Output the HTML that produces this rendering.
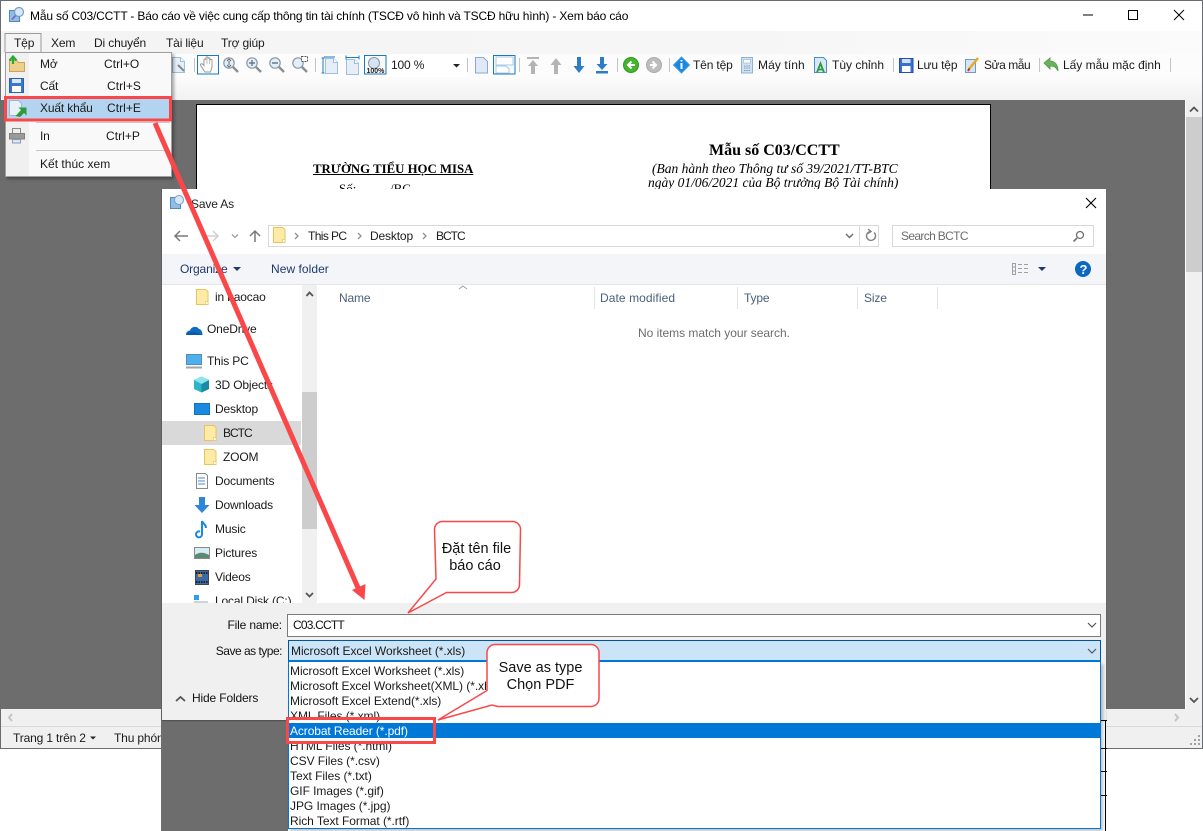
<!DOCTYPE html>
<html><head><meta charset="utf-8">
<style>
html,body{margin:0;padding:0;background:#fff}
body{width:1203px;height:831px;position:relative;overflow:hidden;font-family:"Liberation Sans",sans-serif;font-size:12px;color:#1a1a1a}
.a{position:absolute}
.t{position:absolute;white-space:nowrap;line-height:16px;height:16px;letter-spacing:-.15px}
svg{position:absolute;left:0;top:0;overflow:visible}
.s{font-family:"Liberation Serif",serif;color:#000;letter-spacing:0}
.h{color:#4c607a}
.l{color:#1a1a1a;left:290px;letter-spacing:-.05px}
.c{font-size:14.5px;letter-spacing:0;color:#111;text-align:center}
.m{letter-spacing:.05px}
</style></head><body>
<!-- main window -->
<div class="a" style="left:0;top:0;width:1203px;height:749px;background:#fff;box-sizing:border-box;border:1px solid #696c70;border-bottom:1px solid #6d6d6d"></div>
<div class="a" style="left:1px;top:31px;width:1201px;height:23px;background:linear-gradient(90deg,#f4f4f4,#f6f6f6 60%,#fbfbfb)"></div>
<div class="a" style="left:1px;top:54px;width:1201px;height:46px;background:linear-gradient(#fcfcfc,#fcfcfc 50%,#f1f1f1)"></div>
<div class="a" style="left:1px;top:100px;width:1184px;height:609px;background:#6d6d6d"></div>
<div class="a" style="left:1185px;top:100px;width:1px;height:609px;background:#fff"></div>
<!-- page -->
<div class="a" style="left:196px;top:104px;width:795px;height:120px;background:#fff;box-sizing:border-box;border:1.5px solid #000"></div>
<div class="t s" style="left:313px;top:161px;font-size:12.8px;font-weight:bold;text-decoration:underline">TRƯỜNG TIỂU HỌC MISA</div>
<div class="t s" style="left:339px;top:181px;font-size:13px">Số:</div>
<div class="t s" style="left:390px;top:181px;font-size:13px">/BC</div>
<div class="t s" style="left:709px;top:143px;font-size:16px;font-weight:bold">Mẫu số C03/CCTT</div>
<div class="t s" style="left:652px;top:161px;font-size:13.5px;font-style:italic">(Ban hành theo Thông tư số 39/2021/TT-BTC</div>
<div class="t s" style="left:648px;top:175px;font-size:13.5px;font-style:italic">ngày 01/06/2021 của Bộ trưởng Bộ Tài chính)</div>
<!-- title -->
<div class="t" style="left:30px;top:8px;color:#000;letter-spacing:-.17px">Mẫu số C03/CCTT - Báo cáo về việc cung cấp thông tin tài chính (TSCĐ vô hình và TSCĐ hữu hình) - Xem báo cáo</div>
<div class="t" style="left:14px;top:35px">Tệp</div>
<div class="t" style="left:51px;top:35px">Xem</div>
<div class="t" style="left:94px;top:35px">Di chuyển</div>
<div class="t" style="left:166px;top:35px">Tài liệu</div>
<div class="t" style="left:221px;top:35px">Trợ giúp</div>
<div class="a" style="left:388px;top:54px;width:78px;height:23px;background:#fff"></div>
<div class="t" style="left:391px;top:57px">100 %</div>
<div class="t" style="left:693px;top:57px">Tên tệp</div>
<div class="t" style="left:758px;top:57px;letter-spacing:.1px">Máy tính</div>
<div class="t" style="left:832px;top:57px;letter-spacing:0">Tùy chỉnh</div>
<div class="t" style="left:917px;top:57px">Lưu tệp</div>
<div class="t" style="left:984px;top:57px;letter-spacing:-.45px">Sửa mẫu</div>
<div class="t" style="left:1063px;top:57px;letter-spacing:-.02px">Lấy mẫu mặc định</div>
<svg width="1203" height="831" fill="none">
<defs>
<g id="mag"><circle cx="6" cy="6" r="5.2" fill="#e4eef6" stroke="#8b98a3" stroke-width="1.2"/><path d="M10 10l5 5" stroke="#8a8f94" stroke-width="2.4"/></g>
<g id="pg"><path d="M.5.5h8l4 4v11H.5z" fill="#e6eff8" stroke="#9cc0e0"/><path d="M8.500.5v4h4" fill="#fff" stroke="#9cc0e0"/></g>
<g id="fold"><path d="M.5 .5h9l2.500 2v13H.5z" fill="#ffeaa6" stroke="#e8c45c"/><rect x="9.500" y="12.500" width="2.500" height="3" fill="#fff" stroke="#e8c45c" stroke-width=".7"/></g>
</defs>
<!-- window icon -->
<path d="M9.500 10.500h10v11h-10z" fill="#8fbde6" stroke="#4f8ac2"/><circle cx="19" cy="12" r="4.500" fill="#d6e8f7" stroke="#7a9cc4" stroke-width="1.200"/><path d="M15.500 15.500l-3.500 4" stroke="#7c5eb0" stroke-width="1.500"/>
<!-- window buttons -->
<path d="M1083 15h10" stroke="#000"/><rect x="1128.500" y="10.500" width="9" height="9" stroke="#000"/><path d="M1174 10l10 10M1184 10l-10 10" stroke="#000"/>
<!-- tep tab -->
<path d="M5 52V33.500h36V52" stroke="#9a9a9a"/>
<!-- toolbar -->
<g transform="translate(172,57)"><use href="#pg"/><path d="M6 8l6 6" stroke="#888" stroke-width="2"/></g>
<path d="M194.500 58v14M315.500 58v14M467.500 58v14M519.500 58v14M617.500 58v14M669.500 58v14M893.500 58v14M1039.500 58v14M1170.500 58v14" stroke="#c4c4c4"/>
<rect x="197.500" y="55.500" width="21" height="18.500" fill="#fafafa" stroke="#1a78c2"/>
<path d="M205 72l-4-6c-1.500-2 .5-3 2-1.500l1 1V60c0-1.500 2-1.500 2 0v-2c0-1.500 2-1.500 2 0v1c0-1.500 2-1.500 2 0v1.500c0-1.500 2-1.500 2 0v6l-1.500 5.500z" fill="#fff" stroke="#9a9a9a"/>
<path d="M207 59v5M209.500 59v5M212 60v4" stroke="#aaa" stroke-width=".7"/>
<use href="#mag" x="223" y="57"/><use href="#mag" x="246" y="57"/><use href="#mag" x="269" y="57"/><use href="#mag" x="292" y="57"/>
<path d="M229 61v4M231 61l-2-2-2 2M227 65l2 2 2-2" stroke="#666"/>
<path d="M249 63h6M252 60v6M272 63h6" stroke="#6a7a8a" stroke-width="1.400"/>
<rect x="301.500" y="56.500" width="6" height="5" fill="#fff" stroke="#555" stroke-dasharray="2 1"/>
<g transform="translate(325,58)"><use href="#pg"/></g><path d="M323 58v15M321.500 58h3M321.500 73h3M324 57h11" stroke="#2178c4"/>
<g transform="translate(346,59)"><use href="#pg"/></g><path d="M346 57.500h13M346 55.500v4M359 55.500v4" stroke="#2178c4"/>
<rect x="364.500" y="55.500" width="21.500" height="18.500" fill="#fafafa" stroke="#1a78c2"/>
<circle cx="374" cy="63" r="5.500" fill="#d4e4f2" stroke="#8a98a5"/>
<text x="366.500" y="73" font-family="Liberation Sans" font-size="7" font-weight="bold" fill="#222">100%</text>
<path d="M453 64h7l-3.500 3.500z" fill="#222"/>
<g transform="translate(475,57)"><path d="M.5.500h8l4 4v11.500H.500z" fill="#dfe9f8" stroke="#8aa8d8"/></g>
<rect x="493.500" y="55.500" width="21.500" height="18.500" fill="#fafafa" stroke="#1a78c2"/>
<path d="M496 57h17v8h-17zM496 66h10l3 3v4h-13z" fill="#fff" stroke="#a9cbe8"/>
<g fill="#b4b4b4"><path d="M527 57h12v2h-12zM533 60l5 6h-3v8h-4v-8h-3z"/><path d="M556 58l5.500 7h-3.500v9h-4v-9h-3.500z"/></g>
<g fill="#2d7cc8"><path d="M577 57h4v9h3.500l-5.500 7-5.500-7h3.500z"/><path d="M600 57h4v7h3.500l-5.500 6-5.500-6h3.500zM596 71h12v2.500h-12z"/></g>
<circle cx="631" cy="65" r="7.500" fill="#44b52f" stroke="#2c9a1f"/><path d="M635 65h-6M631.500 61.500l-3.500 3.500 3.500 3.500" stroke="#fff" stroke-width="2"/>
<circle cx="654" cy="65" r="7.500" fill="#bdbdbd" stroke="#aaa"/><path d="M650 65h6M652.500 61.500l3.500 3.500-3.500 3.500" stroke="#fff" stroke-width="2"/>
<path d="M681.500 57l8 8-8 8-8-8z" fill="#1a88e0" stroke="#3a9ce8"/><path d="M681.500 60v1.500M681.500 63v6" stroke="#fff" stroke-width="2"/>
<rect x="741.500" y="57.500" width="11" height="15.500" fill="#cfe2f3" stroke="#8fb4d0"/><rect x="743.500" y="59.500" width="7" height="3.500" fill="#fff" stroke="#8fb4d0" stroke-width=".6"/><path d="M744 66h6M744 68h6M744 70.500h6" stroke="#7d9cb5" stroke-dasharray="1.500 .8"/>
<path d="M814.500 57.500h9l3 3v12h-12z" fill="#d8e8f6" stroke="#4a90cc"/><path d="M817 72.500l3.500-9 3.500 9M818.500 69.500h4" stroke="#2e9a3c" stroke-width="1.800"/>
<rect x="899.500" y="58.500" width="13.500" height="14" fill="#3a6fd0" stroke="#1f4fb0"/><rect x="902" y="59" width="8.500" height="4" fill="#cfe0f8"/><rect x="902" y="66" width="8.500" height="6" fill="#fff"/>
<path d="M965.500 59.500h10v13h-10z" fill="#d4e6f6" stroke="#6a9ccb"/><path d="M969 69l9-11" stroke="#e8a828" stroke-width="2.500"/><path d="M968 71l1.500-2.500" stroke="#c03030" stroke-width="2"/>
<path d="M1044 63l6-5v3c5 0 8 4 8 10-2-4-4-5-8-5v3z" fill="#6cb060" stroke="#4e9a46" stroke-width=".8"/>
</svg>
<!-- scrollbars -->
<div class="a" style="left:1186px;top:100px;width:16px;height:609px;background:#f0f0f0"></div>
<div class="a" style="left:1186px;top:117px;width:16px;height:155px;background:#cdcdcd"></div>
<div class="a" style="left:1px;top:709px;width:1201px;height:17px;background:#f0f0f0"></div>
<div class="a" style="left:1px;top:726px;width:1201px;height:1px;background:#d9d9d9"></div>
<div class="a" style="left:1px;top:727px;width:1201px;height:21px;background:#f0f0f0"></div>
<div class="t" style="left:13px;top:730px">Trang 1 trên 2</div>
<div class="t" style="left:114px;top:730px">Thu phóng</div>
<svg width="1203" height="831" fill="none">
<path d="M1190 111.500l4-4 4 4M1190 698l4 4 4-4" stroke="#555" stroke-width="1.800"/>
<path d="M12 714l-3 3.500 3 3.500" stroke="#c4c4c4" stroke-width="2"/><path d="M1175 714l3 3.500-3 3.500" stroke="#c4c4c4" stroke-width="2"/>
<path d="M90 736.500h6l-3 3z" fill="#222"/>
<path d="M1198 735h2v2h-2zM1194 739h2v2h-2zM1198 739h2v2h-2zM1190 743h2v2h-2zM1194 743h2v2h-2zM1198 743h2v2h-2z" fill="#a0a0a0"/>
</svg>
<!-- lower background behind dialog -->
<div class="a" style="left:161px;top:720px;width:945px;height:111px;background:#6d6d6d"></div>
<div class="a" style="left:288px;top:829px;width:818px;height:2px;background:#fff"></div>
<div class="a" style="left:1100px;top:720px;width:5px;height:111px;background:#fff;border-right:1px solid #000"></div>
<div class="a" style="left:1100px;top:720px;width:7px;height:1px;background:#000"></div>
<div class="a" style="left:1100px;top:748px;width:7px;height:1px;background:#000"></div>
<div class="a" style="left:1100px;top:771px;width:7px;height:1px;background:#000"></div>
<div class="a" style="left:1100px;top:795px;width:7px;height:1px;background:#000"></div>
<!-- dialog -->
<div class="a" style="left:162px;top:189px;width:944px;height:531px;background:#fff;box-shadow:-1px 0 0 #5f5f5f,0 1px 1px rgba(0,0,0,.3)"></div>
<div class="a" style="left:162px;top:254px;width:944px;height:30px;background:#f3f5f8;border-bottom:1px solid #e6e6e6"></div>
<div class="a" style="left:162px;top:603px;width:944px;height:117px;background:#f0f0f0"></div>
<div class="a" style="left:162px;top:421px;width:139px;height:24px;background:#d9d9d9"></div>
<div class="a" style="left:302px;top:285px;width:15px;height:318px;background:#f0f0f0"></div>
<div class="a" style="left:302px;top:392px;width:15px;height:137px;background:#cdcdcd"></div>
<div class="a" style="left:268px;top:225px;width:611px;height:22px;box-sizing:border-box;border:1px solid #d9d9d9"></div>
<div class="a" style="left:859px;top:225px;width:1px;height:22px;background:#d9d9d9"></div>
<div class="a" style="left:892px;top:225px;width:202px;height:22px;box-sizing:border-box;border:1px solid #d9d9d9"></div>
<div class="t" style="left:191px;top:196px;color:#222">Save As</div>
<div class="t" style="left:308px;top:228px;letter-spacing:-.6px">This PC</div>
<div class="t" style="left:370px;top:228px">Desktop</div>
<div class="t" style="left:436px;top:228px;letter-spacing:-1px">BCTC</div>
<div class="t" style="left:901px;top:228px;color:#6d6d6d;letter-spacing:-.65px">Search BCTC</div>
<div class="t" style="left:180px;top:261px;color:#1e3a6e">Organize</div>
<div class="t" style="left:271px;top:261px;color:#1e3a6e;letter-spacing:.05px">New folder</div>
<div class="t h" style="left:339px;top:290px">Name</div>
<div class="t h" style="left:600px;top:290px;letter-spacing:.08px">Date modified</div>
<div class="t h" style="left:744px;top:290px">Type</div>
<div class="t h" style="left:864px;top:290px">Size</div>
<div class="t" style="left:638px;top:325px;color:#6d6d6d;letter-spacing:-.03px">No items match your search.</div>
<div class="a" style="left:594px;top:287px;width:1px;height:22px;background:#e5e5e5"></div>
<div class="a" style="left:737px;top:287px;width:1px;height:22px;background:#e5e5e5"></div>
<div class="a" style="left:857px;top:287px;width:1px;height:22px;background:#e5e5e5"></div>
<div class="a" style="left:937px;top:287px;width:1px;height:22px;background:#e5e5e5"></div>
<!-- nav tree -->
<div class="a" style="left:162px;top:285px;width:140px;height:318px;overflow:hidden">
<div class="t" style="left:53px;top:4px">in baocao</div>
<div class="t" style="left:45px;top:36px">OneDrive</div>
<div class="t" style="left:45px;top:68px">This PC</div>
<div class="t" style="left:53px;top:92px">3D Objects</div>
<div class="t" style="left:53px;top:116px">Desktop</div>
<div class="t" style="left:61px;top:140px;letter-spacing:-1px">BCTC</div>
<div class="t" style="left:61px;top:164px">ZOOM</div>
<div class="t" style="left:53px;top:188px">Documents</div>
<div class="t" style="left:53px;top:212px">Downloads</div>
<div class="t" style="left:53px;top:236px">Music</div>
<div class="t" style="left:53px;top:260px">Pictures</div>
<div class="t" style="left:53px;top:284px">Videos</div>
<div class="t" style="left:53px;top:308px">Local Disk (C:)</div>
</div>
<svg width="1203" height="831" fill="none">
<!-- dialog icons -->
<path d="M170.500 197.500h10v11h-10z" fill="#8fbde6" stroke="#4f8ac2"/><circle cx="179" cy="200" r="4.500" fill="#d6e8f7" stroke="#7a9cc4"/>
<path d="M1086 198l10 10M1096 198l-10 10" stroke="#000" stroke-width="1.100"/>
<path d="M175 236h13M180 231l-5 5 5 5" stroke="#7a7a7a" stroke-width="1.500"/>
<path d="M207 236h11M213 231l5 5-5 5" stroke="#d0d0d0" stroke-width="1.500"/>
<path d="M232 234.500l3 3 3-3" stroke="#a0a0a0" stroke-width="1.300"/>
<path d="M255 242v-11M250 236l5-5 5 5" stroke="#7a7a7a" stroke-width="1.500"/>
<use href="#fold" x="273" y="227"/>
<path d="M295 233l3 3-3 3M358 233l3 3-3 3M423 233l3 3-3 3" stroke="#909090" stroke-width="1.300"/>
<path d="M846 234l3.500 3.500 3.500-3.500" stroke="#707070" stroke-width="1.500"/>
<path d="M874 232.500a4.500 4.500 0 1 1-4-1M868 229l3 2.500-3 2" stroke="#808080" stroke-width="1.400"/>
<circle cx="1080" cy="235" r="3.500" stroke="#707070" stroke-width="1.300"/><path d="M1077 238l-3.500 3.500" stroke="#707070" stroke-width="1.600"/>
<path d="M233 267h8l-4 4z" fill="#1e3a6e"/>
<path d="M1012.500 263.500h3v11h-3zM1012.500 267h3M1012.500 271h3" stroke="#a0a0a0"/><path d="M1018 264.500h4M1024 264.500h4M1018 268.500h4M1024 268.500h4M1018 272.500h4M1024 272.500h4" stroke="#a0a0a0"/>
<path d="M1038 267h8l-4 4z" fill="#1e3a6e"/>
<circle cx="1083" cy="269" r="8" fill="#0a68c0"/>
<text x="1079.500" y="274" font-family="Liberation Sans" font-size="13" font-weight="bold" fill="#fff">?</text>
<path d="M459 289l4-3 4 3" stroke="#a0a0a0"/>
<path d="M306.500 296l3-3.500 3.500 3.500M306 593l3.500 3.500 3.500-3.500" stroke="#555" stroke-width="1.800"/>
<use href="#fold" x="196" y="289"/>
<use href="#fold" x="204" y="425"/><use href="#fold" x="204" y="449"/>
<path d="M186 335c0-3 2-4.500 4-4.500 1-4 7-5 9-1.500 2 0 3.500 3 3.500 6z" fill="#0f6cc4"/><path d="M186 335c3-4 9-4 16.500 0" fill="#0a5aa8"/>
<rect x="186.500" y="354.500" width="15" height="10" fill="#4cb0ee" stroke="#5a8ab0"/><path d="M186 367.500h16" stroke="#9aa6b0" stroke-width="2"/>
<path d="M194 380l7.500-3.500 7.500 3.500v9l-7.500 3.500-7.500-3.500z" fill="#2cb5c8"/><path d="M201.500 384l7.500-4v9l-7.500 3.500z" fill="#1a8aa8"/><path d="M194 380l7.500 4 7.500-4-7.500-3.500z" fill="#8ce4ec"/>
<rect x="194.500" y="403.500" width="15" height="11" fill="#1a8ae0" stroke="#1470c0"/>
<path d="M196.500 473.500h9l2 2v13h-11z" fill="#fff" stroke="#8a8a8a"/><path d="M198 478h7M198 481h7M198 484h7" stroke="#4a8ac8"/>
<path d="M199 497h6v8h4.500l-7.500 8-7.500-8H199z" fill="#2f86d8"/>
<path d="M202 521v13a3 3 0 1 1-2-2.500M202 521c1 3 4 3 4 7" stroke="#1a8ae0" stroke-width="2"/>
<rect x="194.500" y="547.500" width="15" height="11" fill="#d8ecf8" stroke="#8a8a8a"/><path d="M195 555c4-3 9-3 14 0v3h-14z" fill="#5a8a70"/>
<rect x="195.500" y="570.500" width="13" height="14" fill="#3a6aa8" stroke="#444"/><path d="M196 573h12M196 582h12" stroke="#222" stroke-width="2" stroke-dasharray="1.500 1"/><rect x="198" y="574" width="4" height="3" fill="#e8a030"/>
<rect x="194" y="595" width="5" height="5" fill="#2aa0e8"/><rect x="194" y="601" width="14" height="2" fill="#cdd4da"/>
</svg>
<!-- bottom form -->
<div class="t" style="right:921px;top:617px;color:#111">File name:</div>
<div class="t" style="right:921px;top:643px;color:#111;letter-spacing:-.5px">Save as type:</div>
<div class="a" style="left:287px;top:614px;width:814px;height:23px;box-sizing:border-box;background:#fff;border:1px solid #7a7a7a"></div>
<div class="t" style="left:293px;top:617px;color:#111;letter-spacing:-.8px">C03.CCTT</div>
<div class="a" style="left:288px;top:640px;width:813px;height:22px;box-sizing:border-box;background:#cce4f7;border:1px solid #005499;border-bottom:2px solid #0078d7"></div>
<div class="t" style="left:291px;top:643px;letter-spacing:-.05px">Microsoft Excel Worksheet (*.xls)</div>
<div class="t" style="left:192px;top:690px;color:#111">Hide Folders</div>
<!-- dropdown -->
<div class="a" style="left:288px;top:662px;width:813px;height:167px;box-sizing:border-box;background:#fff;border:1px solid #0078d7;border-top:0;box-shadow:2px 2px 3px rgba(0,0,0,.25)"></div>
<div class="a" style="left:289px;top:723px;width:811px;height:15px;background:#0078d7"></div>
<div class="t l" style="top:663px">Microsoft Excel Worksheet (*.xls)</div>
<div class="t l" style="top:678px">Microsoft Excel Worksheet(XML) (*.xls)</div>
<div class="t l" style="top:693px">Microsoft Excel Extend(*.xls)</div>
<div class="t l" style="top:708px">XML Files (*.xml)</div>
<div class="t l" style="top:723px;color:#fff;letter-spacing:-.1px">Acrobat Reader (*.pdf)</div>
<div class="t l" style="top:738px">HTML Files (*.html)</div>
<div class="t l" style="top:753px">CSV Files (*.csv)</div>
<div class="t l" style="top:768px">Text Files (*.txt)</div>
<div class="t l" style="top:783px">GIF Images (*.gif)</div>
<div class="t l" style="top:798px">JPG Images (*.jpg)</div>
<div class="t l" style="top:813px">Rich Text Format (*.rtf)</div>
<svg width="1203" height="831" fill="none">
<path d="M1088 623l4 4 4-4M1088 649l4 4 4-4" stroke="#555" stroke-width="1.200"/>
<path d="M176 701l4.500-4 4.500 4" stroke="#555" stroke-width="1.800"/>
</svg>
<!-- menu -->
<div class="a" style="left:5px;top:52px;width:167px;height:125px;box-sizing:border-box;background:#f9f9f9;border:1px solid #a0a0a0;box-shadow:2px 2px 3px rgba(0,0,0,.35)"></div>
<div class="a" style="left:6px;top:53px;width:23px;height:123px;background:#f0f0f0"></div>
<div class="a" style="left:36px;top:122px;width:134px;height:1px;background:#c8c8c8"></div>
<div class="a" style="left:36px;top:150px;width:134px;height:1px;background:#c8c8c8"></div>
<div class="a" style="left:6px;top:97px;width:165px;height:23px;background:#b3d4f0"></div>
<div class="t" style="left:40px;top:56px">Mở</div><div class="t m" style="left:104px;top:56px">Ctrl+O</div>
<div class="t" style="left:40px;top:78px">Cất</div><div class="t m" style="left:107px;top:78px">Ctrl+S</div>
<div class="t" style="left:40px;top:100px">Xuất khẩu</div><div class="t m" style="left:107px;top:100px">Ctrl+E</div>
<div class="t" style="left:40px;top:128px">In</div><div class="t m" style="left:106px;top:128px">Ctrl+P</div>
<div class="t" style="left:40px;top:156px;letter-spacing:.02px">Kết thúc xem</div>
<svg width="1203" height="831" fill="none">
<path d="M9.500 60.500h7l2 2h6v9h-15z" fill="#eed08a" stroke="#c4a660"/><path d="M13 64v-6.500M9.500 60.500l3.500-4 3.500 4" stroke="#2fa83a" stroke-width="2.200"/>
<rect x="9.500" y="78.500" width="14" height="14" fill="#3a78d0" stroke="#2a60b0"/><rect x="12" y="79" width="9" height="4" fill="#d8e8f8"/><rect x="12" y="86" width="9" height="6" fill="#fff"/>
<path d="M9.500 100.500h9l3 3v12h-12z" fill="#e8f0f8" stroke="#9ab8d8"/><path d="M15.500 116l5.500-6-2.500-2.500h8v8l-2.500-2.500-4 4z" fill="#2f9a3c"/>
<path d="M12.500 128.500h8v5h-8z" fill="#eee" stroke="#8a8a8a"/><path d="M9.500 133.500h15v5.500h-15z" fill="#9a9a9a" stroke="#808080"/><path d="M12.500 139.500h8v3.500h-8z" fill="#d8e8f8" stroke="#8a9ab0"/>
</svg>
<!-- annotations -->
<svg width="1203" height="831" fill="none">
<rect x="5.500" y="97.500" width="165" height="22.500" stroke="#f9474a" stroke-width="3"/>
<rect x="287.500" y="718.500" width="147" height="24" stroke="#f9474a" stroke-width="3"/>
<path d="M155 123L359 590" stroke="#f9474a" stroke-width="5"/>
<path d="M364.500 600L352 590L365.500 584z" fill="#f9474a"/>
<path d="M443 521.500h69.500a8 8 0 0 1 8 8.500l-1 54a8 8 0 0 1-8.500 8.500h-64.500L408 613L436 579L434.500 530a8 8 0 0 1 8.500-8.500z" fill="#fff" stroke="#f9474a" stroke-width="1.500"/>
<path d="M495 644.500h96a8 8 0 0 1 8 8v46a8 8 0 0 1-8 8h-93l-6-1.500L438 720L487 690.500V652.500a8 8 0 0 1 8-8z" fill="#fff" stroke="#f9474a" stroke-width="1.500"/>
</svg>
<div class="t c" style="left:433px;top:541px;width:87px">Đặt tên file</div>
<div class="t c" style="left:433px;top:558px;width:84px">báo cáo</div>
<div class="t c" style="left:484px;top:660px;width:113px">Save as type</div>
<div class="t c" style="left:484px;top:677px;width:113px">Chọn PDF</div>
</body></html>
